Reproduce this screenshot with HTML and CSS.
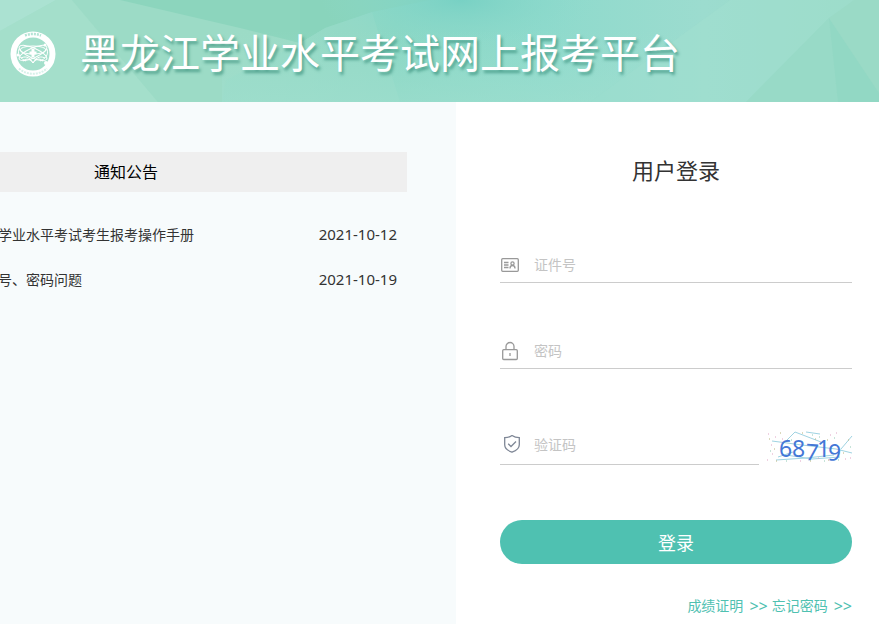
FILE: index.html
```html
<!DOCTYPE html>
<html lang="zh-CN">
<head>
  <meta charset="UTF-8">
  <meta name="viewport" content="width=device-width, initial-scale=1.0">
  <title>黑龙江学业水平考试网上报考平台</title>
  <link rel="stylesheet" href="styles.css">
</head>
<body>
  <header class="header">
    <svg class="header-bg" viewBox="0 0 879 102" preserveAspectRatio="none" aria-hidden="true">
      <defs>
        <linearGradient id="base" x1="0" y1="0" x2="1" y2="0">
          <stop offset="0" stop-color="#a5dfcc"/>
          <stop offset="0.3" stop-color="#98dac3"/>
          <stop offset="0.45" stop-color="#8ad7c4"/>
          <stop offset="0.62" stop-color="#8edacc"/>
          <stop offset="0.8" stop-color="#9cdccf"/>
          <stop offset="1" stop-color="#98d9c4"/>
        </linearGradient>
        <linearGradient id="fade" x1="0" y1="0" x2="0" y2="1">
          <stop offset="0.3" stop-color="#a0dfcf" stop-opacity="0"/>
          <stop offset="1" stop-color="#a0dfcf" stop-opacity="0.6"/>
        </linearGradient>
        <radialGradient id="teal" cx="0.5" cy="0" r="0.5" fy="0">
          <stop offset="0" stop-color="#78d1c4"/>
          <stop offset="1" stop-color="#8fdacd" stop-opacity="0"/>
        </radialGradient>
      </defs>
      <rect width="879" height="102" fill="url(#base)"/>
      <polygon points="0,0 56,0 0,31" fill="#abe2d2"/>
      <polygon points="56,0 72,0 158,102 0,102 0,31" fill="#a4dfcb"/>
      <polygon points="72,0 120,0 240,26 300,43 226,80 222,102 158,102" fill="#9cdbc6"/>
      <polygon points="120,0 300,0 300,43 240,28" fill="#8cd5bd"/>
      <polygon points="300,0 430,0 372,12 325,28 300,43" fill="#89d4bc"/>
      <polygon points="325,28 372,12 400,102 222,102 226,80 300,43" fill="#97dbc8" fill-opacity="0.6"/>
      <rect x="320" width="280" height="102" fill="url(#teal)"/>
      <polygon points="730,0 879,0 829,18 746,102 590,102" fill="#a2dfcf" fill-opacity="0.5"/>
      <polygon points="829,18 838,102 746,102" fill="#98dac7"/>
      <polygon points="829,18 879,93 879,102 838,102" fill="#92d8c4"/>
      <polygon points="829,18 854,0 879,0 879,93" fill="#9adac6"/>
      <polygon points="222,0 730,0 590,102 222,102" fill="url(#fade)"/>
    </svg>
    <svg class="logo" viewBox="0 0 46 46" aria-hidden="true">
      <circle cx="23" cy="23" r="19.5" fill="none" stroke="#fff" stroke-width="6"/>
      <g fill="none" stroke="#fff" stroke-width="1">
        <ellipse cx="23" cy="22" rx="15" ry="5" transform="rotate(24 23 22)"/>
        <ellipse cx="23" cy="22" rx="15" ry="5" transform="rotate(-24 23 22)"/>
        <ellipse cx="23" cy="19" rx="13" ry="4"/>
        <path d="M9 18c-2 6 2 10 7 12M37 18c2 6-2 10-7 12M13 30c4-4 8-1 10 2 2-3 6-6 10-2M11 27c6-3 10 1 12 5 2-4 6-8 12-5"/>
      </g>
      <path d="M21.5 18h3v2.500h2v3h-2V26h-3v-2.500h-2v-3h2z" fill="#fff"/>
      <circle cx="35" cy="14" r="1.500" fill="#fff"/>
      <circle cx="8" cy="24" r="1.500" fill="#fff"/>
      <circle cx="36" cy="32" r="2" fill="#fff"/>
      <path d="M15 4.500c5-2 11-2 16 0" fill="none" stroke="#b4e4d5" stroke-width="2.500" stroke-dasharray="2 1"/>
      <path d="M9 37.500c8 7 20 7 28 0" fill="none" stroke="#d6f1e9" stroke-width="2" stroke-dasharray="2 1"/>
    </svg>
    <h1>黑龙江学业水平考试网上报考平台</h1>
  </header>

  <main class="main">
    <section class="notice">
      <h2>通知公告</h2>
      <ul class="notice-list">
        <li><a href="#">学业水平考试考生报考操作手册</a><time datetime="2021-10-12">2021-10-12</time></li>
        <li><a href="#">号、密码问题</a><time datetime="2021-10-19">2021-10-19</time></li>
      </ul>
    </section>

    <section class="login">
      <h2>用户登录</h2>
      <form>
        <div class="field">
          <label for="cardno" aria-label="证件号">
            <svg class="icon" viewBox="0 0 20 20" fill="none" stroke="#999" stroke-width="1.300">
              <rect x="1.700" y="3.700" width="16.600" height="12.600" rx="1"/>
              <path d="M4 7.500h4.500M4 10h4.500M4 12.500h4.500"/>
              <circle cx="12.500" cy="8.500" r="1.600"/>
              <path d="M10 13.500c0-4 5-4 5 0"/>
            </svg>
          </label>
          <input type="text" id="cardno" name="cardno" placeholder="证件号">
        </div>

        <div class="field">
          <label for="password" aria-label="密码">
            <svg class="icon" viewBox="0 0 20 20" fill="none" stroke="#999" stroke-width="1.300">
              <rect x="2.700" y="8.700" width="14.600" height="9.800" rx="1"/>
              <path d="M6 8.500V5.500a4 4 0 0 1 8 0v3M10 12v3"/>
            </svg>
          </label>
          <input type="password" id="password" name="password" placeholder="密码">
        </div>

        <div class="code-row">
          <div class="field">
            <label for="code" aria-label="验证码">
              <svg class="icon" viewBox="0 0 20 20" fill="none" stroke="#7f8796" stroke-width="1.300">
                <path d="M12 .5C9.800 2 7.400 2.600 4.700 2.700v7c0 3.800 3.300 6 7.300 7.500 4-1.500 7.300-3.700 7.300-7.500v-7C16.600 2.600 14.200 2 12 .5z"/>
                <path d="M8.200 8.700l2.800 2.800 5-5"/>
              </svg>
            </label>
            <input type="text" id="code" name="code" placeholder="验证码">
          </div>
          <!-- 验证码 -->
          <svg class="captcha" viewBox="0 0 86 32" role="img" aria-label="68719">
            <g fill="none" stroke="#9fd3e2" stroke-width="1">
              <path d="M6 10l30 4 34 4 16 4M10 29l30-2 28-3M12 26l15-5M17 13L29 1l26 10M75 18l11-13M20 24l26 4 28-2M40 1l14 2"/>
            </g>
            <path d="M2 3h1M5 14h1M6 23h1M1 29h1M9 6h1M64 4h1M70 2h1M79 28h1M84 27h1M16 8h1M34 30h1M52 27h1" stroke="#e0a3c4"/>
            <path d="M8 18h1M3 8h1M36 2h1M49 8h1M61 9h1M14 2h1M82 9h1M77 22h1M10 30h1M62 29h1M44 30h1" stroke="#b7b27c"/>
            <path d="M4 20h1M25 9h1M46 4h1M53 6h1M68 7h1M84 16h1M20 30h1M58 30h1M72 29h1" stroke="#8fc9b3"/>
            <text class="captcha-text" x="13 26 39 51 61" y="26 26 29 26 29" rotate="0 0 4 0 6">68719</text>
          </svg>
        </div>

        <button type="submit">登录</button>
      </form>
      <nav class="links">
        <a href="#">成绩证明 <span>&gt;&gt;</span></a>
        <a href="#">忘记密码 <span>&gt;&gt;</span></a>
      </nav>
    </section>
  </main>
</body>
</html>
```
FILE: styles.css
```css
* {
  box-sizing: border-box;
}
body {
  margin: 0;
  min-height: 100vh;
  display: flex;
  flex-direction: column;
  font-family: "Noto Sans", "Noto Sans CJK SC", sans-serif;
  font-size: 14px;
  color: #333;
  background-color: #fff;
}
h1, h2, ul {
  margin: 0;
  padding: 0;
  font-weight: normal;
}
a {
  color: inherit;
  text-decoration: none;
}
.header {
  position: relative;
  display: flex;
  align-items: center;
  gap: 24px;
  height: 102px;
  padding: 6px 10px 0;
}
/* 顶部背景 */
.header-bg {
  position: absolute;
  top: 0;
  left: 0;
  width: 100%;
  height: 100%;
}
.logo {
  position: relative;
  width: 46px;
  height: 46px;
}
.header h1 {
  position: relative;
  padding-bottom: 6px;
  font-family: "Noto Sans CJK SC", sans-serif;
  font-size: 40px;
  line-height: 60px;
  color: #fff;
  white-space: nowrap;
  text-shadow: 2px 3px 3px rgba(40, 130, 110, 0.6);
}
.main {
  flex: 1;
  display: grid;
  grid-template-columns: 456fr 423fr;
}
.notice {
  padding: 50px 49px 0 0;
  background-color: #f7fbfc;
}
.notice h2 {
  padding-left: 94px;
  font-size: 16px;
  line-height: 40px;
  color: #000;
  background-color: #efefef;
}
.notice-list {
  margin-top: 20px;
  margin-left: -2px;
  padding-right: 10px;
  list-style: none;
}
.notice-list li {
  display: flex;
  justify-content: space-between;
  line-height: 45px;
}
.notice-list time {
  font-size: 15px;
}
.login {
  padding: 48px 27px 0 44px;
}
.login h2 {
  font-size: 22px;
  line-height: 40px;
  text-align: center;
}
form {
  margin-top: 56px;
}
.field {
  display: flex;
  align-items: center;
  gap: 14px;
  height: 37px;
  margin-bottom: 49px;
  border-bottom: 1px solid #ccc;
}
.field label {
  padding-top: 2px;
}
.icon {
  display: block;
  width: 20px;
  height: 20px;
}
.field input {
  flex: 1;
  min-width: 0;
  height: 34px;
  padding: 0;
  border: none;
  outline: none;
  background: none;
  font-family: inherit;
  font-size: 14px;
  color: #333;
}
.field input::placeholder {
  color: #c4c4c4;
}
.code-row {
  display: flex;
  align-items: flex-end;
  gap: 7px;
  padding-top: 6px;
  margin-bottom: 55px;
}
.code-row .field {
  flex: 1;
  height: 41px;
  margin-bottom: 0;
}
.captcha {
  width: 86px;
  height: 32px;
  margin-bottom: 2px;
  overflow: visible;
}
.captcha-text {
  font-family: "Noto Sans", sans-serif;
  font-size: 23px;
  fill: #4477d6;
}
button {
  display: block;
  width: 100%;
  height: 44px;
  padding: 0;
  border: none;
  border-radius: 22px;
  font-family: inherit;
  font-size: 18px;
  color: #fff;
  background-color: #4fc1b1;
  cursor: pointer;
}
button:hover {
  background-color: #45b3a3;
}
.links {
  display: flex;
  justify-content: flex-end;
  gap: 4px;
  margin-top: 30px;
  line-height: 24px;
  color: #4fc1b1;
}
.links a {
  display: flex;
  gap: 6px;
}
.links span {
  font-size: 16px;
}
```
